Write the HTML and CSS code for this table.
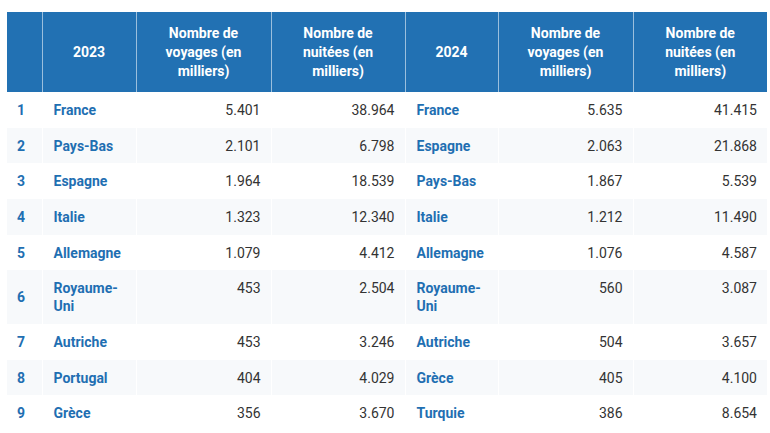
FILE: index.html
```html
<!DOCTYPE html>
<html lang="fr">
<head>
<meta charset="utf-8">
<link rel="stylesheet" href="styles.css">
</head>
<body>
<div class="wrap">
<table class="tbl">
<colgroup>
<col class="c1"><col class="c2"><col class="c3"><col class="c4"><col class="c5"><col class="c6"><col class="c7">
</colgroup>
<thead>
<tr>
<th></th>
<th>2023</th>
<th>Nombre de voyages (en milliers)</th>
<th>Nombre de nuitées (en milliers)</th>
<th>2024</th>
<th>Nombre de voyages (en milliers)</th>
<th>Nombre de nuitées (en milliers)</th>
</tr>
</thead>
<tbody>
<tr><td class="rk">1</td><td class="nm">France</td><td class="num">5.401</td><td class="num">38.964</td><td class="nm">France</td><td class="num">5.635</td><td class="num">41.415</td></tr>
<tr><td class="rk">2</td><td class="nm">Pays-Bas</td><td class="num">2.101</td><td class="num">6.798</td><td class="nm">Espagne</td><td class="num">2.063</td><td class="num">21.868</td></tr>
<tr><td class="rk">3</td><td class="nm">Espagne</td><td class="num">1.964</td><td class="num">18.539</td><td class="nm">Pays-Bas</td><td class="num">1.867</td><td class="num">5.539</td></tr>
<tr><td class="rk">4</td><td class="nm">Italie</td><td class="num">1.323</td><td class="num">12.340</td><td class="nm">Italie</td><td class="num">1.212</td><td class="num">11.490</td></tr>
<tr><td class="rk">5</td><td class="nm">Allemagne</td><td class="num">1.079</td><td class="num">4.412</td><td class="nm">Allemagne</td><td class="num">1.076</td><td class="num">4.587</td></tr>
<tr><td class="rk">6</td><td class="nm">Royaume-Uni</td><td class="num">453</td><td class="num">2.504</td><td class="nm">Royaume-Uni</td><td class="num">560</td><td class="num">3.087</td></tr>
<tr><td class="rk">7</td><td class="nm">Autriche</td><td class="num">453</td><td class="num">3.246</td><td class="nm">Autriche</td><td class="num">504</td><td class="num">3.657</td></tr>
<tr><td class="rk">8</td><td class="nm">Portugal</td><td class="num">404</td><td class="num">4.029</td><td class="nm">Grèce</td><td class="num">405</td><td class="num">4.100</td></tr>
<tr><td class="rk">9</td><td class="nm">Grèce</td><td class="num">356</td><td class="num">3.670</td><td class="nm">Turquie</td><td class="num">386</td><td class="num">8.654</td></tr>
</tbody>
</table>
</div>
</body>
</html>
```
FILE: styles.css
```css
html, body {
  margin: 0;
  padding: 0;
  background: #ffffff;
}
.wrap {
  padding: 12px 3px 0 7px;
}
.tbl {
  width: 760px;
  border-collapse: collapse;
  table-layout: fixed;
  font-family: Roboto, "Liberation Sans", sans-serif;
  font-size: 14px;
  color: #333333;
}
.c1 { width: 35px; }
.c2 { width: 94px; }
.c3 { width: 135px; }
.c4 { width: 134px; }
.c5 { width: 93px; }
.c6 { width: 135px; }
.c7 { width: 134px; }
.tbl th {
  background: #2271b3;
  color: #ffffff;
  font-weight: 700;
  text-align: center;
  vertical-align: middle;
  height: 80px;
  padding: 1px 12px 0;
  line-height: 19px;
  border-left: 1px solid rgba(255, 255, 255, 0.55);
  box-sizing: border-box;
}
.tbl th:first-child {
  border-left: none;
}
.tbl td {
  padding: 9px 10px 8.67px 11px;
  line-height: 18px;
  vertical-align: top;
  border-left: 1px solid #ffffff;
}
.tbl td:first-child {
  border-left: none;
}
.tbl tbody tr:nth-child(even) td {
  background: #f7f9fb;
}
.tbl td.rk {
  color: #1f6fb2;
  font-weight: 700;
  vertical-align: middle;
  padding-left: 10px;
  padding-right: 4px;
}
.tbl td.nm {
  color: #1f6fb2;
  font-weight: 700;
}
.tbl td.num {
  text-align: right;
  padding-right: 10px;
}
```
